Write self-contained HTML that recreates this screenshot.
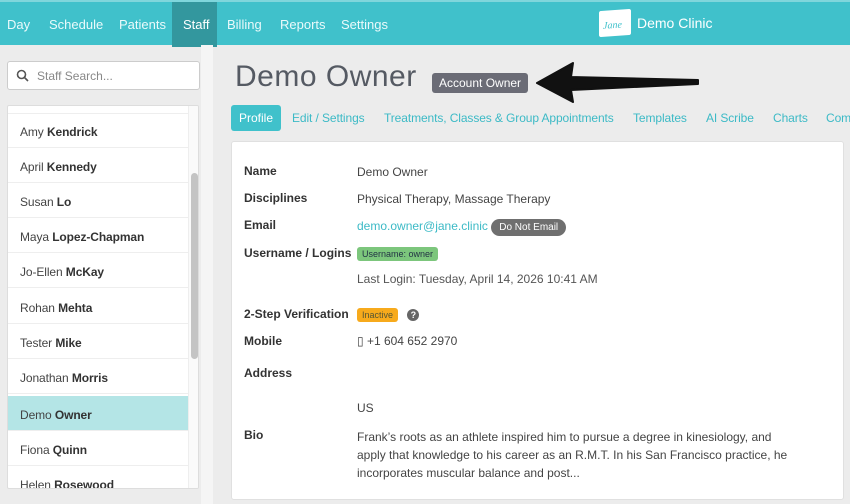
<!DOCTYPE html>
<html><head><style>
*{margin:0;padding:0;box-sizing:border-box}
body{width:850px;height:504px;overflow:hidden;background:#ececec;font-family:"Liberation Sans",sans-serif;position:relative;color:#333}
.top{position:absolute;left:0;top:0;width:850px;height:45px;background:#40c1cb;border-top:2px solid #7fd6dc}
.nav{position:absolute;top:15px;font-size:13px;color:#eafafb}
.staff{position:absolute;left:172px;top:0;width:45px;height:45px;background:#33979e}
.strip{position:absolute;left:201px;top:45px;width:12px;height:459px;background:#f5f5f5}
.search{position:absolute;left:7px;top:61px;width:193px;height:29px;background:#fff;border:1px solid #ccc;border-radius:3px;font-size:12px;color:#888;padding:7px 0 0 29px}
.list{position:absolute;left:7px;top:105px;width:192px;height:384px;background:#fff;border:1px solid #ddd;overflow:hidden;border-radius:2px}
.row{position:absolute;left:0;width:180px;height:35px;border-bottom:1px solid #eee;font-size:12px;padding:12px 0 0 12px;color:#444;letter-spacing:-.1px}
.row b{color:#333}
.track{position:absolute;left:180px;top:0;width:12px;height:384px;background:#fafafa;border-left:1px solid #eee}
.thumb{position:absolute;left:183px;top:67px;width:7px;height:186px;background:#c4c4c4;border-radius:4px}
h1{position:absolute;left:235px;top:60px;font-size:30px;font-weight:normal;color:#555a63;letter-spacing:.5px}
.ao{position:absolute;left:432px;top:73px;width:96px;height:20px;background:#6b6c76;color:#fff;font-size:12px;border-radius:3px;padding:3px 0 0 7px}
.tab{position:absolute;top:111px;font-size:12px;color:#3cbac6;letter-spacing:-.1px}
.prof{position:absolute;left:231px;top:105px;width:50px;height:26px;background:#40c1cb;color:#fff;border-radius:3px;font-size:12px;padding:6px 0 0 8px}
.card{position:absolute;left:231px;top:141px;width:613px;height:359px;background:#fff;border:1px solid #e0e0e0;border-radius:3px}
.l{position:absolute;left:244px;font-size:12px;font-weight:bold;color:#333}
.v{position:absolute;left:357px;font-size:12px;color:#444}
.pill{display:inline-block;border-radius:3px;font-size:9px;padding:2px 5px}
</style></head><body>
<div class="top">
<div class="staff"></div>
<span class="nav" style="left:7px">Day</span>
<span class="nav" style="left:49px">Schedule</span>
<span class="nav" style="left:119px">Patients</span>
<span class="nav" style="left:183px;color:#fff">Staff</span>
<span class="nav" style="left:227px">Billing</span>
<span class="nav" style="left:280px">Reports</span>
<span class="nav" style="left:341px">Settings</span>
<div style="position:absolute;left:599px;top:8px;width:32px;height:26px;background:#fff;transform:skewY(-4deg);border-radius:2px;color:#40c1cb;font-size:10px;font-style:italic;padding:10px 0 0 4px;font-family:'Liberation Serif',serif">Jane</div>
<span class="nav" style="left:637px;top:13px;font-size:14px;color:#fff">Demo Clinic</span>
</div>
<div class="strip"></div>
<div class="search"><svg style="position:absolute;left:8px;top:7px" width="13" height="13" viewBox="0 0 13 13"><circle cx="5.5" cy="5.5" r="4" fill="none" stroke="#555" stroke-width="1.6"/><line x1="8.5" y1="8.5" x2="12" y2="12" stroke="#555" stroke-width="1.6"/></svg>Staff Search...</div>
<div class="list">
<div class="row" style="top:-27px"></div>
<div class="row" style="top:7px">Amy <b>Kendrick</b></div>
<div class="row" style="top:42px">April <b>Kennedy</b></div>
<div class="row" style="top:77px">Susan <b>Lo</b></div>
<div class="row" style="top:112px">Maya <b>Lopez-Chapman</b></div>
<div class="row" style="top:147px">Jo-Ellen <b>McKay</b></div>
<div class="row" style="top:183px">Rohan <b>Mehta</b></div>
<div class="row" style="top:218px">Tester <b>Mike</b></div>
<div class="row" style="top:253px">Jonathan <b>Morris</b></div>
<div class="row" style="top:290px;background:#b4e5e6">Demo <b>Owner</b></div>
<div class="row" style="top:325px">Fiona <b>Quinn</b></div>
<div class="row" style="top:360px">Helen <b>Rosewood</b></div>
<div class="track"></div><div class="thumb"></div>
</div>
<h1>Demo Owner</h1>
<div class="ao">Account Owner</div>
<svg style="position:absolute;left:535px;top:60px" width="170" height="45" viewBox="0 0 170 45"><path d="M2 23 L38 3 L36 17 L163 20 L163 24 L36 30 L38 42 Z" fill="#111" stroke="#111" stroke-width="2" stroke-linejoin="round"/></svg>
<div class="prof">Profile</div>
<span class="tab" style="left:292px">Edit / Settings</span>
<span class="tab" style="left:384px">Treatments, Classes &amp; Group Appointments</span>
<span class="tab" style="left:633px">Templates</span>
<span class="tab" style="left:706px">AI Scribe</span>
<span class="tab" style="left:773px">Charts</span>
<span class="tab" style="left:826px">Com</span>
<div class="card"></div>
<span class="l" style="top:164px">Name</span><span class="v" style="top:165px">Demo Owner</span>
<span class="l" style="top:191px">Disciplines</span><span class="v" style="top:192px">Physical Therapy, Massage Therapy</span>
<span class="l" style="top:218px">Email</span><span class="v" style="top:219px;color:#3cbac6">demo.owner@jane.clinic <span class="pill" style="background:#6f6f6f;color:#fff;font-size:10px;border-radius:9px;padding:3px 8px">Do Not Email</span></span>
<span class="l" style="top:246px">Username / Logins</span><span class="v" style="top:246px"><span class="pill" style="background:#7cc67c;color:#234">Username: owner</span></span>
<span class="v" style="top:272px;color:#555">Last Login: Tuesday, April 14, 2026 10:41 AM</span>
<span class="l" style="top:307px">2-Step Verification</span><span class="v" style="top:307px"><span class="pill" style="background:#f7aa1c;color:#553">Inactive</span> <span style="display:inline-block;width:12px;height:12px;border-radius:6px;background:#666;color:#fff;font-size:9px;text-align:center;line-height:12px;margin-left:6px;font-weight:bold">?</span></span>
<span class="l" style="top:334px">Mobile</span><span class="v" style="top:334px">▯ +1 604 652 2970</span>
<span class="l" style="top:366px">Address</span>
<span class="v" style="top:401px">US</span>
<span class="l" style="top:428px">Bio</span>
<span class="v" style="top:428px;width:480px;line-height:18px;white-space:nowrap">Frank’s roots as an athlete inspired him to pursue a degree in kinesiology, and<br>apply that knowledge to his career as an R.M.T. In his San Francisco practice, he<br>incorporates muscular balance and post...</span>
</body></html>
